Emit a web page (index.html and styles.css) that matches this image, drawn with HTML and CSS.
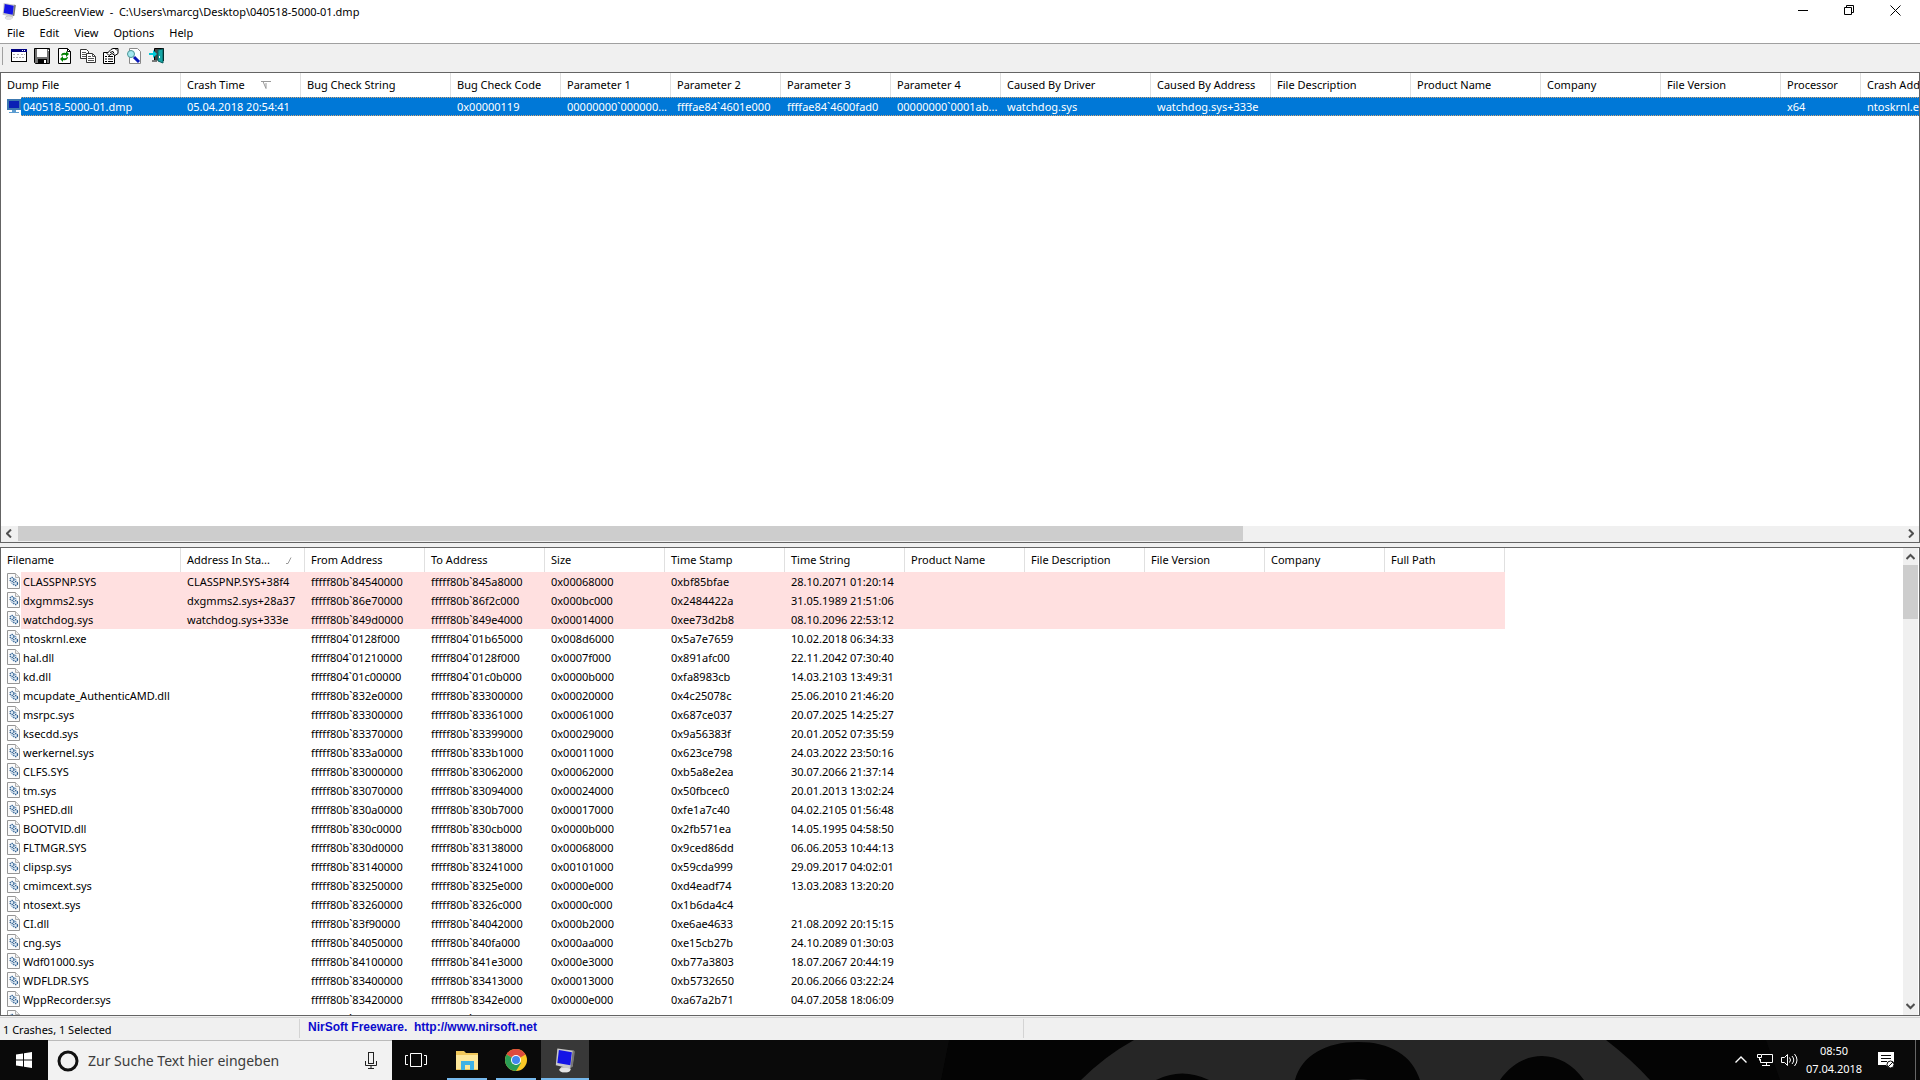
FILE: index.html
```html
<!DOCTYPE html>
<html lang="de">
<head>
<meta charset="utf-8">
<title>BlueScreenView</title>
<link rel="stylesheet" href="styles.css">
</head>
<body>
<svg class="sprite" aria-hidden="true">
  <symbol id="dll" viewBox="0 0 13 16">
    <path d="M.5.5h8l4 4v11H.5z" fill="#fbfbfb" stroke="#969696"/>
    <path d="M8.5.5v4h4" fill="#eee" stroke="#b0b0b0"/>
    <circle cx="5" cy="6.500" r="2" fill="#dfeaf4" stroke="#2f6092" stroke-width="1.300" stroke-dasharray="1.300 .7"/>
    <circle cx="8.500" cy="10.500" r="2" fill="#dfeaf4" stroke="#2f6092" stroke-width="1.300" stroke-dasharray="1.300 .7"/>
    <path d="M4 9.500l2 2M8 6l1.500 1" stroke="#5f8db8"/>
  </symbol>
  <symbol id="monitor" viewBox="0 0 28 34">
    <path d="M9 26l9-1 4 4-5 4H10l-4-3z" fill="#bdbdbd"/>
    <ellipse cx="14" cy="30" rx="7" ry="3" fill="#e4e4e4"/>
    <path d="M4 2l22 3-2 20-4 3L2 24z" fill="#c9c9c9"/>
    <path d="M24 5l3 1-3 20-3 1z" fill="#777"/>
    <path d="M6 4l17 3-2 17-17-3z" fill="#1414e6"/>
  </symbol>
</svg>

<header class="titlebar">
  <svg class="app-icon"><use href="#monitor"/></svg>
  <h1>BlueScreenView  -  C:\Users\marcg\Desktop\040518-5000-01.dmp</h1>
  <div class="window-buttons">
    <button aria-label="Minimieren"><svg width="11" height="11"><path d="M0 5.500h10" stroke="#000"/></svg></button>
    <button aria-label="Verkleinern"><svg width="11" height="11"><path d="M.5 2.500h7v7h-7zM2.500 2.500v-2h7v7h-2" fill="none" stroke="#000"/></svg></button>
    <button aria-label="Schließen"><svg width="11" height="11"><path d="M.5.5l10 10M10.500.5l-10 10" stroke="#000"/></svg></button>
  </div>
</header>

<nav class="menubar">
  <button>File</button><button>Edit</button><button>View</button><button>Options</button><button>Help</button>
</nav>

<div class="toolbar">
  <button aria-label="Advanced Options"><svg width="16" height="16"><path d="M0 1h16v13H0z" fill="#000"/><path d="M1 4h14v9H1z" fill="#fff"/><path d="M0 1h16v3H0z" fill="#000080"/><path d="M11 2h1v1h-1zM13 2h1v1h-1z" fill="#fff"/><path d="M2 6.500h3m1 0h3m1 0h4M2 9.500h12" stroke="#aaa" stroke-dasharray="2 1"/></svg></button>
  <button aria-label="Save"><svg width="16" height="16"><path d="M.5.500h15v15h-14l-1-1z" fill="#707070" stroke="#000"/><path d="M3 1h10v8H3z" fill="#fff"/><path d="M4 11h9v5H4z" fill="#000"/><path d="M10 12h2v3h-2z" fill="#fff"/><path d="M14 2h1v1h-1z" fill="#fff"/></svg></button>
  <button aria-label="Refresh"><svg width="16" height="16"><path d="M1.500.500h9l3 3v12h-12z" fill="#fff" stroke="#000"/><path d="M10.500.500v3h3" fill="none" stroke="#000"/><path d="M4 7q1-3 5-2V3l3 3-3 3V7q-3-1-4 1zM11 9q-1 4-5 3v2l-3-3 3-3v2q3 1 4-1z" fill="#008000"/></svg></button>
  <button aria-label="Copy"><svg width="16" height="16"><path d="M.5 1.500h6l2 2v7h-8z" fill="#fff" stroke="#333"/><path d="M2 4.500h4M2 6.500h5M2 8.500h4" stroke="#555"/><path d="M6.500 5.500h6l3 3v6h-9z" fill="#fff" stroke="#333"/><path d="M12.500 5.500v3h3M8 8.500h3M8 10.500h6M8 12.500h6" fill="none" stroke="#555"/></svg></button>
  <button aria-label="Properties"><svg width="16" height="16"><path d="M.5 4.500h11v11H.5z" fill="#fff" stroke="#000"/><path d="M2 8.500h2m1 0h5M2 11h2m1 0h5M2 13.500h2m1 0h5" stroke="#000"/><path d="M4 5.500l4-4 2-1h5v5l-3 2-3-2-3 2z" fill="#fff" stroke="#000"/><path d="M7 4.500l3-1 1 2M12 .5l2 2" fill="none" stroke="#000"/></svg></button>
  <button aria-label="Find"><svg width="16" height="16"><path d="M3.500.500h8l3 3v12h-11z" fill="#fff" stroke="#888"/><circle cx="5" cy="6" r="3.500" fill="#a4e8f0" stroke="#4a9494"/><path d="M8 9l5 5" stroke="#0818b8" stroke-width="3"/></svg></button>
  <button aria-label="Exit"><svg width="16" height="16"><path d="M5.500 12V.5h9V13" fill="#444" stroke="#000"/><path d="M9 2l5-1v14l-5-2z" fill="#16a6a6" stroke="#075c5c"/><path d="M10 8h1v2h-1z" fill="#fff"/><path d="M0 5h4V2l4 4-4 4V7H0z" fill="#00c8d8"/><path d="M3 13h5" stroke="#000"/></svg></button>
</div>

<main class="panes">
  <section class="pane pane-crashes" aria-label="Crashes">
    <div class="list">
      <table class="grid crashes">
        <colgroup><col class="w180"><col class="w120"><col class="w150"><col class="w110"><col class="w110"><col class="w110"><col class="w110"><col class="w110"><col class="w150"><col class="w120"><col class="w140"><col class="w130"><col class="w120"><col class="w120"><col class="w80"><col class="w120"></colgroup>
        <thead><tr><th>Dump File</th><th>Crash Time<svg class="sort" width="10" height="8"><path d="M0 .5h10M2 .5l3 7V2" fill="none" stroke="#999"/></svg></th><th>Bug Check String</th><th>Bug Check Code</th><th>Parameter 1</th><th>Parameter 2</th><th>Parameter 3</th><th>Parameter 4</th><th>Caused By Driver</th><th>Caused By Address</th><th>File Description</th><th>Product Name</th><th>Company</th><th>File Version</th><th>Processor</th><th>Crash Address</th></tr></thead>
        <tbody><tr class="selected"><td><svg class="crash-icon" width="14" height="16"><path d="M0 1h14v11H0z" fill="#3c78b0"/><path d="M2 3h10v7H2z" fill="#0a20b4"/><path d="M5 12h4v2h3v1H2v-1h3z" fill="#5c9cd0"/></svg>040518-5000-01.dmp</td><td>05.04.2018 20:54:41</td><td></td><td>0x00000119</td><td>00000000`000000...</td><td>ffffae84`4601e000</td><td>ffffae84`4600fad0</td><td>00000000`0001ab...</td><td>watchdog.sys</td><td>watchdog.sys+333e</td><td></td><td></td><td></td><td></td><td>x64</td><td>ntoskrnl.exe</td></tr></tbody>
      </table>
    </div>
    <div class="scroll-x">
      <button aria-label="Links"><svg width="7" height="9"><path d="M5 0.500l-4 4 4 4" fill="none" stroke="#505050" stroke-width="2"/></svg></button>
      <div class="track"><div class="thumb"></div></div>
      <button aria-label="Rechts"><svg width="7" height="9"><path d="M2 0.500l4 4-4 4" fill="none" stroke="#505050" stroke-width="2"/></svg></button>
    </div>
  </section>

  <section class="pane pane-drivers" aria-label="Drivers">
    <div class="list">
      <table class="grid drivers">
        <colgroup><col class="w180"><col class="w124"><col class="w120" span="10"></colgroup>
        <thead><tr><th>Filename</th><th>Address In Sta...<svg class="sort" width="6" height="7"><path d="M0 6.500h2l3-6" fill="none" stroke="#999"/></svg></th><th>From Address</th><th>To Address</th><th>Size</th><th>Time Stamp</th><th>Time String</th><th>Product Name</th><th>File Description</th><th>File Version</th><th>Company</th><th>Full Path</th></tr></thead>
        <tbody>
          <tr class="on-stack"><td><svg class="file-icon"><use href="#dll"/></svg>CLASSPNP.SYS</td><td>CLASSPNP.SYS+38f4</td><td>fffff80b`84540000</td><td>fffff80b`845a8000</td><td>0x00068000</td><td>0xbf85bfae</td><td>28.10.2071 01:20:14</td><td colspan="5"></td></tr>
          <tr class="on-stack"><td><svg class="file-icon"><use href="#dll"/></svg>dxgmms2.sys</td><td>dxgmms2.sys+28a37</td><td>fffff80b`86e70000</td><td>fffff80b`86f2c000</td><td>0x000bc000</td><td>0x2484422a</td><td>31.05.1989 21:51:06</td><td colspan="5"></td></tr>
          <tr class="on-stack"><td><svg class="file-icon"><use href="#dll"/></svg>watchdog.sys</td><td>watchdog.sys+333e</td><td>fffff80b`849d0000</td><td>fffff80b`849e4000</td><td>0x00014000</td><td>0xee73d2b8</td><td>08.10.2096 22:53:12</td><td colspan="5"></td></tr>
          <tr><td><svg class="file-icon"><use href="#dll"/></svg>ntoskrnl.exe</td><td></td><td>fffff804`0128f000</td><td>fffff804`01b65000</td><td>0x008d6000</td><td>0x5a7e7659</td><td>10.02.2018 06:34:33</td><td colspan="5"></td></tr>
          <tr><td><svg class="file-icon"><use href="#dll"/></svg>hal.dll</td><td></td><td>fffff804`01210000</td><td>fffff804`0128f000</td><td>0x0007f000</td><td>0x891afc00</td><td>22.11.2042 07:30:40</td><td colspan="5"></td></tr>
          <tr><td><svg class="file-icon"><use href="#dll"/></svg>kd.dll</td><td></td><td>fffff804`01c00000</td><td>fffff804`01c0b000</td><td>0x0000b000</td><td>0xfa8983cb</td><td>14.03.2103 13:49:31</td><td colspan="5"></td></tr>
          <tr><td><svg class="file-icon"><use href="#dll"/></svg>mcupdate_AuthenticAMD.dll</td><td></td><td>fffff80b`832e0000</td><td>fffff80b`83300000</td><td>0x00020000</td><td>0x4c25078c</td><td>25.06.2010 21:46:20</td><td colspan="5"></td></tr>
          <tr><td><svg class="file-icon"><use href="#dll"/></svg>msrpc.sys</td><td></td><td>fffff80b`83300000</td><td>fffff80b`83361000</td><td>0x00061000</td><td>0x687ce037</td><td>20.07.2025 14:25:27</td><td colspan="5"></td></tr>
          <tr><td><svg class="file-icon"><use href="#dll"/></svg>ksecdd.sys</td><td></td><td>fffff80b`83370000</td><td>fffff80b`83399000</td><td>0x00029000</td><td>0x9a56383f</td><td>20.01.2052 07:35:59</td><td colspan="5"></td></tr>
          <tr><td><svg class="file-icon"><use href="#dll"/></svg>werkernel.sys</td><td></td><td>fffff80b`833a0000</td><td>fffff80b`833b1000</td><td>0x00011000</td><td>0x623ce798</td><td>24.03.2022 23:50:16</td><td colspan="5"></td></tr>
          <tr><td><svg class="file-icon"><use href="#dll"/></svg>CLFS.SYS</td><td></td><td>fffff80b`83000000</td><td>fffff80b`83062000</td><td>0x00062000</td><td>0xb5a8e2ea</td><td>30.07.2066 21:37:14</td><td colspan="5"></td></tr>
          <tr><td><svg class="file-icon"><use href="#dll"/></svg>tm.sys</td><td></td><td>fffff80b`83070000</td><td>fffff80b`83094000</td><td>0x00024000</td><td>0x50fbcec0</td><td>20.01.2013 13:02:24</td><td colspan="5"></td></tr>
          <tr><td><svg class="file-icon"><use href="#dll"/></svg>PSHED.dll</td><td></td><td>fffff80b`830a0000</td><td>fffff80b`830b7000</td><td>0x00017000</td><td>0xfe1a7c40</td><td>04.02.2105 01:56:48</td><td colspan="5"></td></tr>
          <tr><td><svg class="file-icon"><use href="#dll"/></svg>BOOTVID.dll</td><td></td><td>fffff80b`830c0000</td><td>fffff80b`830cb000</td><td>0x0000b000</td><td>0x2fb571ea</td><td>14.05.1995 04:58:50</td><td colspan="5"></td></tr>
          <tr><td><svg class="file-icon"><use href="#dll"/></svg>FLTMGR.SYS</td><td></td><td>fffff80b`830d0000</td><td>fffff80b`83138000</td><td>0x00068000</td><td>0x9ced86dd</td><td>06.06.2053 10:44:13</td><td colspan="5"></td></tr>
          <tr><td><svg class="file-icon"><use href="#dll"/></svg>clipsp.sys</td><td></td><td>fffff80b`83140000</td><td>fffff80b`83241000</td><td>0x00101000</td><td>0x59cda999</td><td>29.09.2017 04:02:01</td><td colspan="5"></td></tr>
          <tr><td><svg class="file-icon"><use href="#dll"/></svg>cmimcext.sys</td><td></td><td>fffff80b`83250000</td><td>fffff80b`8325e000</td><td>0x0000e000</td><td>0xd4eadf74</td><td>13.03.2083 13:20:20</td><td colspan="5"></td></tr>
          <tr><td><svg class="file-icon"><use href="#dll"/></svg>ntosext.sys</td><td></td><td>fffff80b`83260000</td><td>fffff80b`8326c000</td><td>0x0000c000</td><td>0x1b6da4c4</td><td></td><td colspan="5"></td></tr>
          <tr><td><svg class="file-icon"><use href="#dll"/></svg>CI.dll</td><td></td><td>fffff80b`83f90000</td><td>fffff80b`84042000</td><td>0x000b2000</td><td>0xe6ae4633</td><td>21.08.2092 20:15:15</td><td colspan="5"></td></tr>
          <tr><td><svg class="file-icon"><use href="#dll"/></svg>cng.sys</td><td></td><td>fffff80b`84050000</td><td>fffff80b`840fa000</td><td>0x000aa000</td><td>0xe15cb27b</td><td>24.10.2089 01:30:03</td><td colspan="5"></td></tr>
          <tr><td><svg class="file-icon"><use href="#dll"/></svg>Wdf01000.sys</td><td></td><td>fffff80b`84100000</td><td>fffff80b`841e3000</td><td>0x000e3000</td><td>0xb77a3803</td><td>18.07.2067 20:44:19</td><td colspan="5"></td></tr>
          <tr><td><svg class="file-icon"><use href="#dll"/></svg>WDFLDR.SYS</td><td></td><td>fffff80b`83400000</td><td>fffff80b`83413000</td><td>0x00013000</td><td>0xb5732650</td><td>20.06.2066 03:22:24</td><td colspan="5"></td></tr>
          <tr><td><svg class="file-icon"><use href="#dll"/></svg>WppRecorder.sys</td><td></td><td>fffff80b`83420000</td><td>fffff80b`8342e000</td><td>0x0000e000</td><td>0xa67a2b71</td><td>04.07.2058 18:06:09</td><td colspan="5"></td></tr>
          <tr><td><svg class="file-icon"><use href="#dll"/></svg>SleepStudyHelper.sys</td><td></td><td>fffff80b`83430000</td><td>fffff80b`8343f000</td><td>0x0000f000</td><td>0xa8d1a9d7</td><td>14.07.2059 20:39:03</td><td colspan="5"></td></tr>
        </tbody>
      </table>
    </div>
    <div class="scroll-y">
      <button aria-label="Nach oben"><svg width="9" height="7"><path d="M.5 6l4-4 4 4" fill="none" stroke="#505050" stroke-width="2"/></svg></button>
      <div class="track"><div class="thumb"></div></div>
      <button aria-label="Nach unten"><svg width="9" height="7"><path d="M.5 1l4 4 4-4" fill="none" stroke="#505050" stroke-width="2"/></svg></button>
    </div>
  </section>
</main>

<footer class="statusbar">
  <span class="count">1 Crashes, 1 Selected</span>
  <span class="credit"><a href="http://www.nirsoft.net">NirSoft Freeware.  http://www.nirsoft.net</a></span>
</footer>

<div class="taskbar">
  <svg class="wallpaper" viewBox="0 0 1920 40" preserveAspectRatio="xMidYMid slice" aria-hidden="true">
    <path d="M0 0h949l-8 40H0z" fill="#0a0a0a"/><path d="M1766 0h154v40h-140z" fill="#0a0a0a"/>
    <path d="M1134 0h472q26 20 44 40H1081q24-24 53-40z" fill="#262626"/>
    <path d="M1295 40C1302 15 1326 2 1358 2s54 13 62 38zM1156 40q26-13 53 0zM1500 40c22-32 62-32 84 0z" fill="#040404"/>
    <path d="M1348 40q10-2 20 0z" fill="#262626"/>
  </svg>
  <button class="start" aria-label="Start"><svg width="16" height="16"><path d="M0 2.500l7-1v6H0zM8 1.300L16 0v7.500H8zM0 8.500h7v6l-7-1zM8 8.500h8V16l-8-1.200z" fill="#fff"/></svg></button>
  <div class="search">
    <svg width="22" height="22"><circle cx="11" cy="11" r="9" fill="none" stroke="#111" stroke-width="3"/></svg>
    <input type="text" placeholder="Zur Suche Text hier eingeben" aria-label="Suche">
    <svg width="12" height="18"><rect x="3.500" y=".5" width="5" height="11" fill="none" stroke="#222"/><path d="M.5 9v4.500h11V9M6 13.500v3M3 16.500h6" fill="none" stroke="#222"/></svg>
  </div>
  <button class="task" aria-label="Taskansicht"><svg width="22" height="16"><path d="M5.500 1.500h11v13h-11zM3 3.500H.5v9H3M19 3.500h2.500v9H19" fill="none" stroke="#fff"/></svg></button>
  <div class="apps">
    <button class="task open" aria-label="Explorer"><svg width="22" height="19"><path d="M0 0h8l2 2h12v17H0z" fill="#f0c75a"/><path d="M0 4h22v14H0z" fill="#fde79a"/><path d="M5 19v-9h13v9h-4v-5H9v5z" fill="#3fb2e6"/></svg></button>
    <button class="task open" aria-label="Chrome"><svg width="22" height="22"><circle cx="11" cy="11" r="11" fill="#fbc926"/><path d="M11 11L1.500 5.500A11 11 0 0 1 20.500 5.500z" fill="#dd4b3e"/><path d="M11 11L1.500 5.500A11 11 0 0 0 11 22l5-8z" fill="#2a9d55"/><circle cx="11" cy="11" r="5" fill="#fff"/><circle cx="11" cy="11" r="4" fill="#4286f0"/></svg></button>
    <button class="task open current" aria-label="BlueScreenView"><svg width="22" height="26"><use href="#monitor"/></svg></button>
  </div>
  <div class="tray">
    <button aria-label="Ausgeblendete Symbole"><svg width="12" height="8"><path d="M.5 6.500L6 1l5.500 5.500" fill="none" stroke="#fff" stroke-width="1.400"/></svg></button>
    <button aria-label="Netzwerk"><svg width="16" height="14"><path d="M5 1.500h10.500v8H3.500V6M9.500 10v3M5 12.500h8M.5 1.500h4v3h-4zM2.500 4.500v3" fill="none" stroke="#fff"/></svg></button>
    <button aria-label="Lautstärke"><svg width="17" height="14"><path d="M.5 4.500h3l3-3v11l-3-3h-3zM8.500 4.500q2 2.500 0 5M11 3q3.500 4 0 8M13.500 1q5 6 0 12" fill="none" stroke="#fff"/></svg></button>
    <time class="clock" datetime="2018-04-07T08:50"><span>08:50</span><span>07.04.2018</span></time>
    <button class="notes" aria-label="Info-Center"><svg width="17" height="17"><path d="M0 0h16v13h-5v3l-3-3H0z" fill="#fff"/><path d="M3 3.500h10M3 6.500h10M3 9.500h6" stroke="#0a0a0a"/><circle cx="12.500" cy="12.500" r="3.500" fill="#fff" stroke="#0a0a0a"/><path d="M10 15l5-5" stroke="#0a0a0a"/></svg></button>
    <div class="show-desktop"></div>
  </div>
</div>
</body>
</html>
```
FILE: styles.css
```css
* { box-sizing: border-box; }

body {
  display: flex;
  flex-direction: column;
  height: 100vh;
  margin: 0;
  overflow: hidden;
  background: #f0f0f0;
  color: #000;
  font: 11px/19px "Noto Sans", "Open Sans", sans-serif;
}

button {
  display: flex;
  align-items: center;
  justify-content: center;
  padding: 0;
  border: 0;
  background: none;
  color: inherit;
  font: inherit;
}

svg { display: block; flex: none; }
.sprite { position: absolute; width: 0; height: 0; }

/* Title, menu, toolbar */
.titlebar { display: flex; height: 22px; background: #fff; }
.app-icon { width: 16px; height: 18px; margin: 2px 5px 0 1px; }
.titlebar h1 {
  margin: 0 auto 0 0;
  font-size: 11px;
  font-weight: 400;
  line-height: 24px;
  white-space: pre;
}
.window-buttons { display: flex; padding-right: 2px; }
.window-buttons button { width: 46px; height: 20px; }

.menubar {
  display: flex;
  gap: 15px;
  height: 22px;
  padding-left: 7px;
  border-bottom: 1px solid #a0a0a0;
  background: #fff;
  line-height: 22px;
}

.toolbar { display: flex; align-items: center; height: 28px; padding: 0 2px 4px; }
.toolbar::before { content: ""; width: 1px; height: 18px; margin-right: 4px; background: #a0a0a0; }
.toolbar button { width: 23px; height: 22px; }

/* List panes */
.panes { display: flex; flex: 1; flex-direction: column; gap: 4px; min-height: 0; }
.pane { display: flex; min-height: 0; border: 1px solid #646464; background: #fff; }
.pane-crashes { flex: 471 1 0; flex-direction: column; }
.pane-drivers { flex: 469 1 0; }
.list { flex: 1; min-width: 0; min-height: 0; overflow: hidden; }

.grid { border-spacing: 0; table-layout: fixed; }
.crashes { width: 1980px; }
.drivers { width: 1504px; }
.w80 { width: 80px; }
.w110 { width: 110px; }
.w120 { width: 120px; }
.w124 { width: 124px; }
.w130 { width: 130px; }
.w140 { width: 140px; }
.w150 { width: 150px; }
.w180 { width: 180px; }

.grid th, .grid td {
  padding: 0 0 0 6px;
  overflow: hidden;
  text-align: left;
  font-weight: 400;
  white-space: nowrap;
}
.grid th { height: 24px; padding-bottom: 2px; border-right: 1px solid #e0e0e0; }
.grid td { height: 19px; }
.sort { display: inline-block; margin-left: 16px; }
.grid td svg { float: left; margin-right: 3px; }
.file-icon { width: 13px; height: 16px; margin-top: 1px; }
.crash-icon { margin-top: 1px; }
.grid td .crash-icon { margin-right: 2px; }

.on-stack td { background: #ffe0e0; }
.on-stack td:first-child { background: linear-gradient(90deg, #fff 20px, #ffe0e0 20px); }
.selected td {
  --dots: repeating-linear-gradient(90deg, #d8a878 0 1px, #0078d7 1px 2px);
  background: var(--dots) 0 0 / 100% 1px no-repeat, var(--dots) 0 100% / 100% 1px no-repeat, #0078d7;
  color: #fff;
}
.selected td:first-child {
  background: linear-gradient(#fff, #fff) 0 0 / 20px 100% no-repeat, var(--dots) 0 0 / 100% 1px no-repeat, var(--dots) 0 100% / 100% 1px no-repeat, #0078d7;
}

.scroll-x { display: flex; height: 16px; padding-bottom: 1px; background: #f0f0f0; }
.scroll-x button { width: 17px; }
.scroll-x .track { flex: 1; }
.scroll-x .thumb { width: 65%; height: 100%; background: #cdcdcd; }
.scroll-y { display: flex; flex-direction: column; width: 16px; border-right: 1px solid #fff; background: #f0f0f0; }
.scroll-y button { height: 17px; }
.scroll-y .track { flex: 1; }
.scroll-y .thumb { height: 54px; background: #cdcdcd; }

/* Status bar */
.statusbar {
  display: flex;
  height: 23px;
  margin-top: 1px;
  padding: 1px 0 2px;
  border-top: 1px solid #d4d4d4;
}
.statusbar span { border-right: 1px solid #d4d4d4; }
.count { width: 300px; padding: 3px 0 0 3px; line-height: 16px; }
.credit { display: flex; width: 724px; padding-left: 8px; }
.credit a {
  color: #0a0acd;
  font: bold 12px/16px "Liberation Sans", sans-serif;
  text-decoration: none;
  white-space: pre;
}

/* Taskbar */
.taskbar { position: relative; display: flex; flex: none; height: 40px; background: #040404; color: #fff; }
.taskbar > * { position: relative; }
.taskbar .wallpaper { position: absolute; width: 100%; height: 100%; }
.start { width: 48px; }
.search {
  display: flex;
  align-items: center;
  gap: 9px;
  width: 344px;
  padding: 0 15px 0 9px;
  border-top: 1px solid #bbb;
  background: #f2f2f2;
}
.search input {
  flex: 1;
  min-width: 0;
  padding: 0;
  border: 0;
  background: none;
  font: 14px/20px "Noto Sans", sans-serif;
}
.search input::placeholder { color: #3c3c3c; opacity: 1; }
.task { width: 48px; height: 40px; }
.apps { display: flex; gap: 1px; margin-left: 3px; }
.open { background: linear-gradient(#76b9ed, #76b9ed) center bottom / 40px 2px no-repeat; }
.current { background: linear-gradient(#76b9ed, #76b9ed) center bottom / 48px 2px no-repeat #383838; }
.tray { display: flex; align-items: center; gap: 8px; margin-left: auto; }
.tray button:first-child { margin-right: 2px; }
.clock {
  display: flex;
  flex-direction: column;
  width: 56px;
  align-items: center;
  line-height: 18px;
}
.notes { margin-left: 8px; }
.show-desktop { width: 5px; height: 40px; margin-left: 12px; border-left: 1px solid #666; }
```
